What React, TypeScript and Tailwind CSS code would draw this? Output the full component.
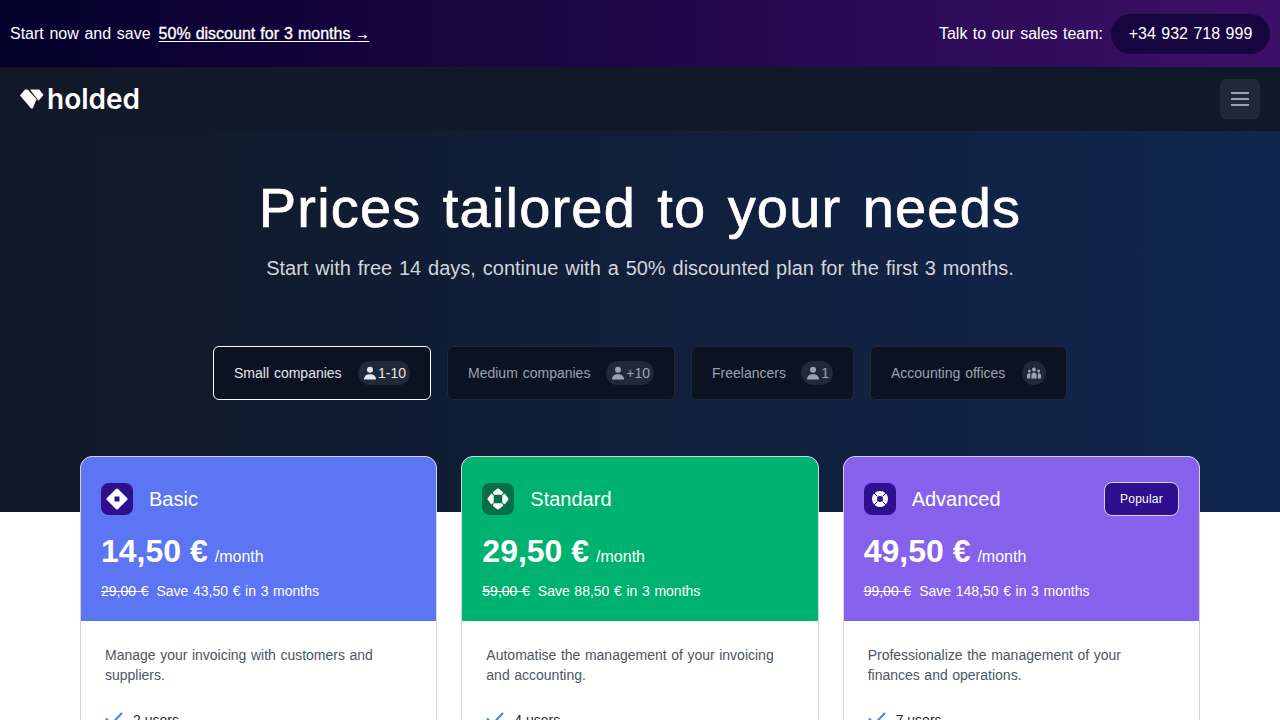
import React from "react";

const Person = () => (
  <svg viewBox="0 0 16 16" className="h-4 w-4" fill="currentColor">
    <circle cx="8" cy="4.8" r="3" />
    <path d="M2 14.5c0-3.4 2.4-5.3 6-5.3s6 1.900 6 5.300z" />
  </svg>
);

const Group = () => (
  <svg viewBox="0 0 16 16" className="h-4 w-4" fill="currentColor">
    <circle cx="8" cy="4.6" r="2" />
    <circle cx="3.400" cy="6" r="1.500" />
    <circle cx="12.600" cy="6" r="1.500" />
    <path d="M5.400 13.500V10c0-1.600 1-2.600 2.600-2.600s2.600 1 2.600 2.600v3.500z" />
    <path d="M1 13.500v-3c0-1.300.8-2.200 2-2.200.5 0 .9.1 1.200.3v4.900zM15 13.500v-3c0-1.300-.8-2.200-2-2.200-.5 0-.9.1-1.200.3v4.900z" />
  </svg>
);

const tabs = [
  { label: "Small companies", count: "1-10", active: true, w: "w-[218px]" },
  { label: "Medium companies", count: "+10", active: false, w: "w-[228px]" },
  { label: "Freelancers", count: "1", active: false, w: "w-[163px]" },
  { label: "Accounting offices", count: "", active: false, w: "w-[197px]" },
];

const BasicIcon = () => (
  <svg viewBox="0 0 22 22" className="h-[22px] w-[22px]">
    <path d="M11 2 20 11 11 20 2 11z" fill="#fff" stroke="#fff" strokeWidth="3" strokeLinejoin="round" />
    <rect x="8.500" y="8.500" width="5" height="5" rx="0.6" fill="#2f0f8f" />
  </svg>
);
const StandardIcon = () => (
  <svg viewBox="0 0 22 22" className="h-[22px] w-[22px]" fill="#fff" stroke="#fff" strokeWidth="1.500" strokeLinejoin="round">
    <path d="M6.500 4.500 11 1.200l4.500 3.300-1 1.500h-7z" />
    <path d="M6.500 17.500 11 20.800l4.500-3.300-1-1.500h-7z" />
    <path d="M4.500 6.500 1.200 11l3.300 4.500 1.500-1v-7z" />
    <path d="M17.500 6.500 20.800 11l-3.300 4.500-1.500-1v-7z" />
  </svg>
);
const AdvancedIcon = () => (
  <svg viewBox="0 0 20 20" className="h-5 w-5">
    <circle cx="10" cy="10" r="8" fill="#fff" />
    <circle cx="10" cy="10" r="3" fill="#2f0f8f" />
    <path d="M3.500 3.500 7.500 7.500M16.500 3.500l-4 4M3.500 16.500l4-4M16.500 16.500l-4-4" stroke="#2f0f8f" strokeWidth="1" />
  </svg>
);

const plans = [
  {
    name: "Basic",
    price: "14,50 €",
    old: "29,00 €",
    save: "Save 43,50 € in 3 months",
    desc: "Manage your invoicing with customers and suppliers.",
    users: "2 users",
    head: "bg-[#5b75f3]",
    tile: "bg-[#2f0f8f]",
    icon: <BasicIcon />,
    popular: false,
  },
  {
    name: "Standard",
    price: "29,50 €",
    old: "59,00 €",
    save: "Save 88,50 € in 3 months",
    desc: "Automatise the management of your invoicing and accounting.",
    users: "4 users",
    head: "bg-[#00b26f]",
    tile: "bg-[#066f49]",
    icon: <StandardIcon />,
    popular: false,
  },
  {
    name: "Advanced",
    price: "49,50 €",
    old: "99,00 €",
    save: "Save 148,50 € in 3 months",
    desc: "Professionalize the management of your finances and operations.",
    users: "7 users",
    head: "bg-[#8662ec]",
    tile: "bg-[#2f0f8f]",
    icon: <AdvancedIcon />,
    popular: true,
  },
];

export default function App() {
  return (
    <div className="h-[720px] overflow-hidden bg-white font-['Liberation_Sans',Arial,sans-serif]">
      <div className="flex h-[67px] items-center justify-between bg-gradient-to-r from-[#05012b] to-[#3d1068] px-2.5 text-white">
        <div className="flex items-center gap-2 text-base [word-spacing:1.2px]">
          <span>Start now and save</span>
          <a className="underline underline-offset-2 [-webkit-text-stroke:0.3px_white] [word-spacing:0.6px]">
            50% discount for 3 months <span className="text-sm">→</span>
          </a>
        </div>
        <div className="flex items-center gap-2 text-base [word-spacing:1px]">
          <span>Talk to our sales team:</span>
          <span className="flex h-10 w-[159px] items-center justify-center rounded-full bg-[#15063f]">+34 932 718 999</span>
        </div>
      </div>

      <nav className="flex h-16 items-center justify-between bg-[#111827] px-5">
        <div className="flex items-center gap-[3px]">
          <svg viewBox="0 0 24 20" className="h-[20px] w-6 shrink-0" fill="#fff">
            <path d="M0 6.500 5 0.500h2.600l9 9.800-4 9.200h-1.500z" />
            <path d="M10 0.500h9.300L23.500 6l-5 5.800z" />
          </svg>
          <span className="font-['Inter',sans-serif] text-[28px] leading-none font-semibold text-white">holded</span>
        </div>
        <button className="flex h-10 w-10 items-center justify-center rounded-md bg-[#1f2937]">
          <svg viewBox="0 0 18 14" className="h-[14px] w-[18px]" stroke="#9ca3af" strokeWidth="2">
            <path d="M0 1h18M0 7h18M0 13h18" />
          </svg>
        </button>
      </nav>

      <section className="h-[381px] bg-gradient-to-r from-[#111827] to-[#10264f] pt-[43px]">
        <h1 className="text-center text-[56px] leading-[68px] tracking-[1.2px] text-white [-webkit-text-stroke:0.7px_white] [word-spacing:4.5px]">
          Prices tailored to your needs
        </h1>
        <p className="mt-3 text-center text-xl leading-7 text-[#d1d5db] [word-spacing:1.300px]">
          Start with free 14 days, continue with a 50% discounted plan for the first 3 months.
        </p>
        <div className="mt-[64px] flex justify-center gap-4">
          {tabs.map((t) => (
            <div
              key={t.label}
              className={`flex h-[54px] ${t.w} items-center justify-between rounded-md border bg-[#0b1222] px-5 text-sm [word-spacing:1px] ${
                t.active ? "border-white text-[#e5e7eb]" : "border-[#1f2937] text-[#9ca3af]"
              }`}
            >
              <span>{t.label}</span>
              {t.count ? (
                <span className="flex h-6 items-center rounded-full bg-[#1f2937] px-1 text-sm">
                  <Person />
                  {t.count}
                </span>
              ) : (
                <span className="flex h-6 w-6 items-center justify-center rounded-full bg-[#1f2937] text-[#9ca3af]">
                  <Group />
                </span>
              )}
            </div>
          ))}
        </div>
      </section>

      <div className="-mt-14 grid grid-cols-3 gap-6 px-20">
        {plans.map((p) => (
          <div key={p.name} className="overflow-hidden rounded-xl border border-[#d1d5db] bg-white">
            <div className={`h-[164px] ${p.head} px-5 pt-[25px] text-white`}>
              <div className="flex h-[34px] items-center">
                <span className={`flex h-8 w-8 items-center justify-center rounded-lg ${p.tile}`}>{p.icon}</span>
                <span className="ml-4 text-xl">{p.name}</span>
                {p.popular && (
                  <span className="ml-auto flex h-[34px] w-[75px] items-center justify-center rounded-lg border border-[#d1d5db] bg-[#2f0f8f] text-xs tracking-[0.2px]">
                    Popular
                  </span>
                )}
              </div>
              <div className="mt-[15px] flex items-baseline gap-[7px]">
                <span className="text-[32px] leading-10 font-bold">{p.price}</span>
                <span className="text-base">/month</span>
              </div>
              <div className="mt-[10px] flex gap-2 text-sm leading-5 [word-spacing:0.750px]">
                <span className="line-through">{p.old}</span>
                <span>{p.save}</span>
              </div>
            </div>
            <div className="px-6 pt-6">
              <p className="text-sm leading-5 text-[#4b5563] [word-spacing:0.660px]">{p.desc}</p>
              <div className="mt-[25px] flex items-center gap-[10px] text-sm leading-5 text-[#1f2937]">
                <svg viewBox="0 0 18 16" className="h-4 w-[18px]" fill="none" stroke="#3b82f6" strokeWidth="2">
                  <path d="M1 6.500 6.500 12 17 1" />
                </svg>
                {p.users}
              </div>
            </div>
          </div>
        ))}
      </div>
    </div>
  );
}
